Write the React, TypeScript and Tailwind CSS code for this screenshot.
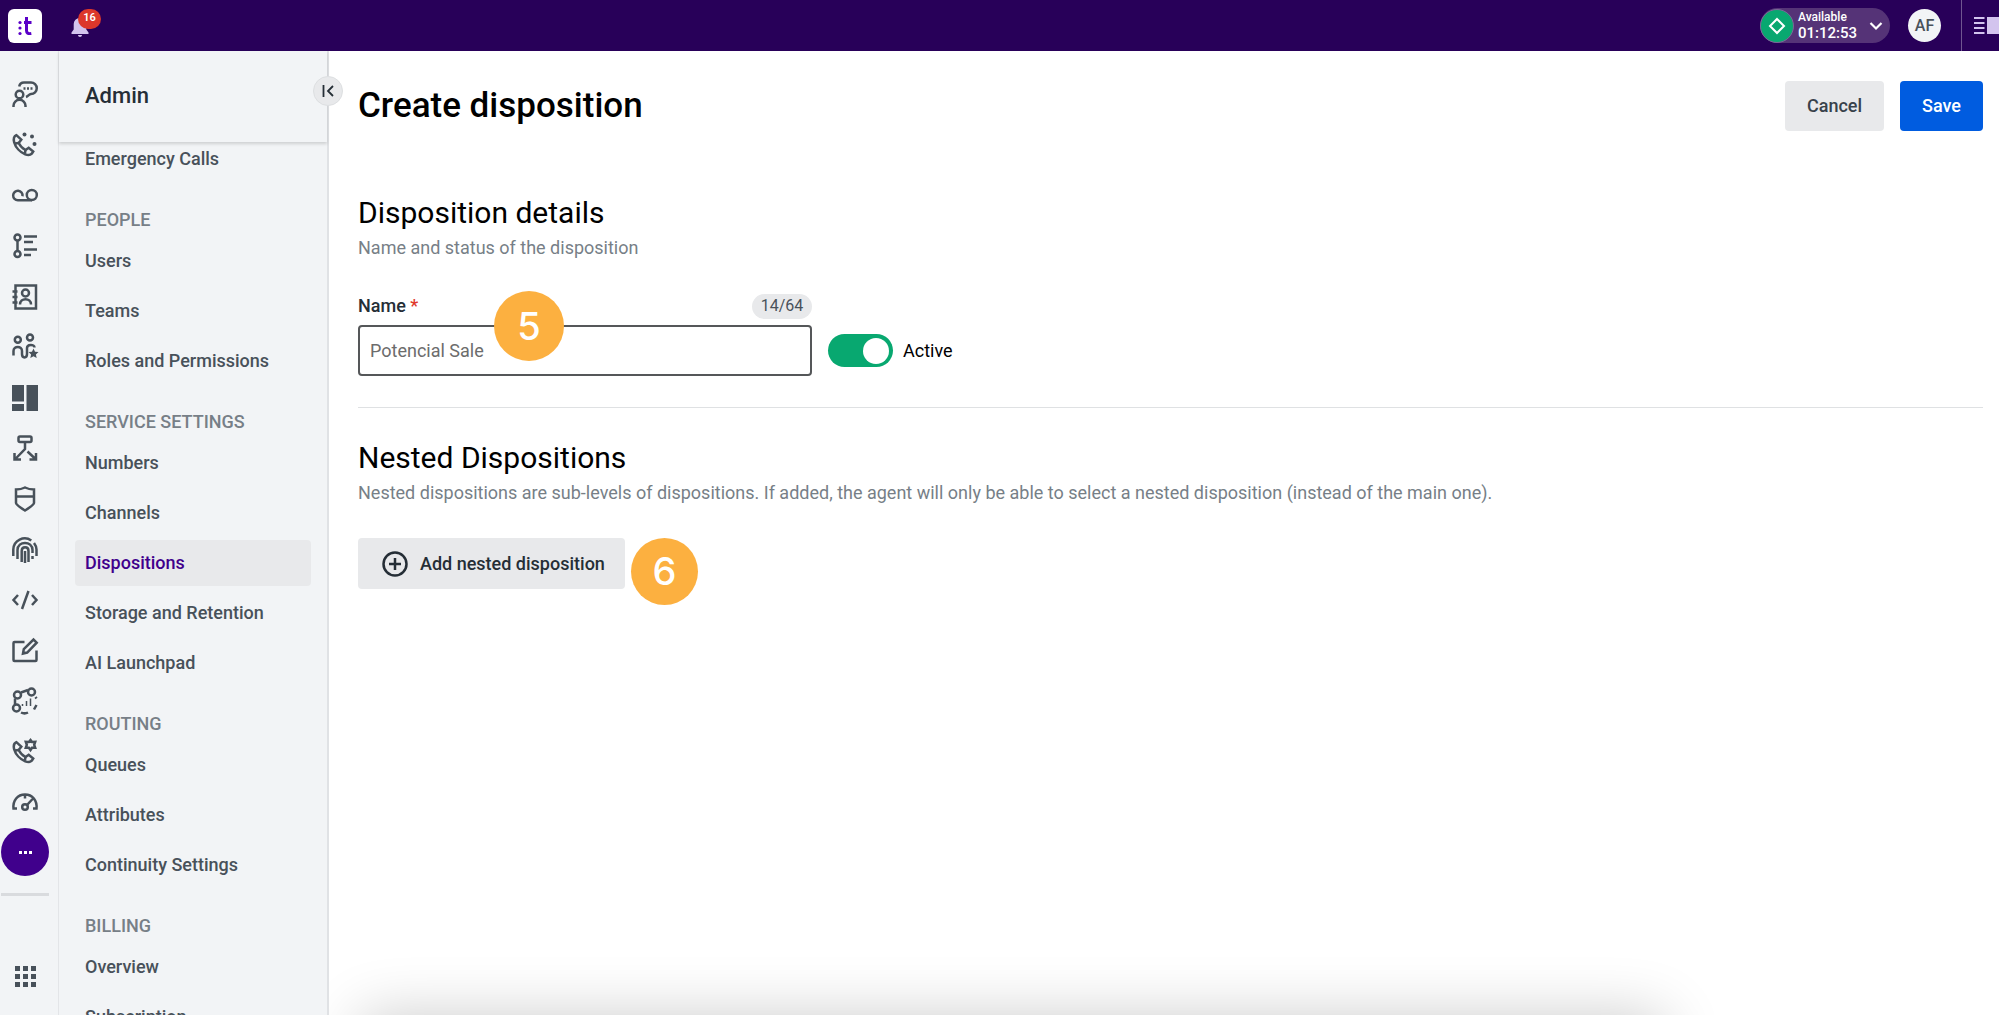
import { useState } from 'react';
import type { ReactNode } from 'react';

interface NavGroup {
  title?: string;
  items: string[];
}

const NAV: NavGroup[] = [
  { items: ['Emergency Calls'] },
  { title: 'People', items: ['Users', 'Teams', 'Roles and Permissions'] },
  {
    title: 'Service settings',
    items: ['Numbers', 'Channels', 'Dispositions', 'Storage and Retention', 'AI Launchpad'],
  },
  { title: 'Routing', items: ['Queues', 'Attributes', 'Continuity Settings'] },
  { title: 'Billing', items: ['Overview', 'Subscription'] },
];

const HANDSET = (
  <>
    <path d="M4.4 3.2C2.2 4.2 1.3 7 2.2 10.4c1.4 5 6 10 11 12 2.600 1 5.200.8 6.600-.7l1.400-2.200-4.500-3.700-3.200 2.200C10.500 16.500 8 13.600 6.700 11l2.600-3.300z" />
    <path d="M6.700 11 3 11.500M13.500 18l-.600 3.600" />
  </>
);

/** Left rail entries, drawn on a 26px grid */
const RAIL: { label: string; icon: ReactNode }[] = [
  {
    label: 'Conversations',
    icon: (
      <>
        <circle cx="7.500" cy="13.500" r="3.800" />
        <path d="M1.500 26v-1.200a6 6 0 0 1 12 0V26" />
        <path d="M7.200 5.500C7.700 3 9.500 1.500 12 1.500h7a5.500 5.500 0 0 1 0 11.500c-2 .2-2.800 2.300-5 3" />
        <path d="M11.500 7.500h2M15 7.500h2M18.500 7.500h2" />
      </>
    ),
  },
  {
    label: 'Dialer',
    icon: (
      <>
        {HANDSET}
        <g fill="currentColor" stroke="none">
          <circle cx="12.500" cy="2.500" r="2" />
          <circle cx="20" cy="4.500" r="2" />
          <circle cx="22.500" cy="12" r="2" />
        </g>
      </>
    ),
  },
  {
    label: 'Voicemail',
    icon: (
      <>
        <path d="M10.500 14.200A4.700 4.700 0 1 0 6 18.200h14" />
        <circle cx="19.800" cy="13" r="5" />
      </>
    ),
  },
  {
    label: 'Activities',
    icon: (
      <>
        <circle cx="5.500" cy="4.500" r="3" />
        <circle cx="5.500" cy="21" r="3" />
        <path d="M5.500 7.500V18M12 3.500h13M12 9h9M12 16.500h13M12 22h7" />
      </>
    ),
  },
  {
    label: 'Contacts',
    icon: (
      <>
        <path d="M3.500 1.500h20.500v23H3.500z" />
        <path d="M.5 7.500h5M.5 13h5M.5 18.500h5" />
        <circle cx="13.500" cy="9" r="3.500" />
        <path d="M8 20.500c0-7 11-7 11 0" />
      </>
    ),
  },
  {
    label: 'Teams',
    icon: (
      <>
        <circle cx="5.800" cy="5.800" r="3" />
        <circle cx="18" cy="3.500" r="3" />
        <path d="M1.500 21.500V17c0-5.500 8.500-5.500 8.500 0v3c0 4.500 5 4.500 5 0v-6c0-4 7.500-4 7.500-.5" />
        <path
          d="m21.500 14.500 1.500 3.300 3.500.3-2.600 2.400.8 3.600-3.200-1.900-3.200 1.900.8-3.600-2.600-2.400 3.500-.3z"
          fill="currentColor"
          stroke="none"
        />
      </>
    ),
  },
  {
    label: 'Dashboards',
    icon: <path d="M0 0h12v16.500H0zM0 19h12v7H0zM14.500 0H26v26H14.500z" fill="currentColor" stroke="none" />,
  },
  {
    label: 'Flows',
    icon: (
      <>
        <rect x="6.500" y="1.500" width="13" height="5.500" rx="1.500" />
        <path d="M13 7v7L2.800 24.500M2.500 18v6.500H9M15.500 16.500l8.500 8M24 18v6.500h-6.500" />
      </>
    ),
  },
  {
    label: 'Guardian',
    icon: <path d="M4 3.500c3.500 0 6-.5 9-2 3 1.500 5.500 2 9 2V17c0 1.500-5 5-9 7.500-4-2.500-9-6-9-7.500zM4 10.500h18" />,
  },
  {
    label: 'Identity',
    icon: (
      <>
        <path d="M1.300 19v-6.500a11.500 11.500 0 0 1 18-9M22 6c1.500 2 2.500 4 2.500 6.500V19" />
        <path d="M5.500 22V13c0-9.500 15-9.500 15 0v3M20.500 19v3" />
        <path d="M9.700 25V14c0-5 6.800-5 6.800 0v11M13 14v12" />
      </>
    ),
  },
  {
    label: 'Developers',
    icon: <path d="m6 8-4.500 5L6 18M20 8l4.500 5-4.500 5M16.500 4 10 22" />,
  },
  {
    label: 'Workspace designer',
    icon: (
      <>
        <path d="M12.500 4h-10a1 1 0 0 0-1 1v17a1 1 0 0 0 1 1h21a1 1 0 0 0 1-1v-9.500" />
        <path d="m11 15.500.8-4.500 9.700-9.500 3.200 3.200-9.500 9.800z" />
      </>
    ),
  },
  {
    label: 'Insights',
    icon: (
      <>
        <circle cx="5.500" cy="7" r="3.500" />
        <circle cx="19.500" cy="4" r="3.500" />
        <circle cx="4.500" cy="20" r="3.500" />
        <path d="M9 4.500 16 2M3 10.500v6M23.500 9l1 1.500M24.500 17l-2.500 4.500M9 24.500c2 1 5 1 7 0" />
        <path d="M10.500 16v2M14.500 13v5M18.500 10.500V18" strokeWidth="1.500" />
      </>
    ),
  },
  {
    label: 'Call settings',
    icon: (
      <>
        {HANDSET}
        <path d="m18.500 1 1.500 2 3.200-.2-1 3 1 3-3.200-.1-1.500 2.300-1.600-2.300-3.100.1 1-3-1-3 3.100.2z" />
      </>
    ),
  },
  {
    label: 'Performance',
    icon: (
      <>
        <path d="M5 18.500H1.500c-.8-8 4-14 11.500-14s12.300 6 11.500 14H21M13 5v3.500M15 15l6-6.500" />
        <circle cx="13" cy="17" r="2.800" />
      </>
    ),
  },
];

function Icon({ children }: { children: ReactNode }) {
  return (
    <svg width="26" height="26" viewBox="0 0 26 26" fill="none" stroke="currentColor" strokeWidth="2.5" overflow="visible" aria-hidden="true">
      {children}
    </svg>
  );
}

function TopBar() {
  return (
    <header className="flex h-[51px] shrink-0 items-center bg-[#280059] pl-2 text-white">
      <a href="#home" aria-label="Home" className="flex size-[34px] items-center justify-center rounded-md bg-white">
        <svg width="14" height="20" viewBox="0 0 14 20" aria-hidden="true">
          <g fill="#5a00c8">
            <circle cx="2" cy="6.500" r="1.600" />
            <circle cx="2" cy="12" r="1.600" />
            <circle cx="2" cy="17.500" r="1.600" />
          </g>
          <path d="M8.500 1v13.500c0 2.500 1.500 3.500 4.800 3M6 6.500h7.500" fill="none" stroke="#5a00c8" strokeWidth="3" />
        </svg>
      </a>
      <button type="button" aria-label="Notifications" className="relative ml-7 flex h-[34px] w-5 items-end justify-center pb-1.5">
        <svg width="18" height="20" viewBox="0 0 18 20" fill="#d3c4ee" aria-hidden="true">
          <path d="M9 1a6 6 0 0 0-6.300 6.300v5.200L.5 15.500V17h17v-1.500l-2.200-3V7.300A6 6 0 0 0 9 1zM7 18h4c0 2.500-4 2.500-4 0z" />
        </svg>
        <span className="absolute top-0 left-2 flex h-5 w-[23px] items-center justify-center rounded-full bg-[#dc372b] text-[11px] font-semibold">
          16
        </span>
      </button>

      <div className="ml-auto flex h-full items-center">
        <button type="button" className="flex h-[35px] w-[130px] items-center rounded-full bg-[#553377] text-left">
          <span className="flex size-[34px] items-center justify-center rounded-full border border-[#7d6699] bg-[#08a870]">
            <svg width="18" height="18" viewBox="0 0 18 18" fill="none" stroke="white" strokeWidth="2" aria-hidden="true">
              <path d="m9 2 7 7-7 7-7-7z" />
            </svg>
          </span>
          <span className="ml-1 flex flex-col pb-0.5 font-medium">
            <span className="text-xs leading-4">Available</span>
            <span className="text-[15px] leading-4">01:12:53</span>
          </span>
          <svg className="ml-3" width="14" height="10" viewBox="0 0 14 10" fill="none" stroke="white" strokeWidth="2.2" aria-hidden="true">
            <path d="m1.500 2 5.500 5.500L12.500 2" />
          </svg>
        </button>
        <button
          type="button"
          className="ml-[18px] flex size-[33px] items-center justify-center rounded-full bg-[#f2f4f6] text-base font-medium text-[#4a525a]"
        >
          AF
        </button>
        <button type="button" aria-label="Toggle side panel" className="ml-5 flex h-full w-[38px] items-center overflow-hidden border-l border-[#6f5690] pl-3">
          <svg className="shrink-0" width="26" height="20" viewBox="0 0 26 20" fill="#d3c4ee" aria-hidden="true">
            <path d="M0 1h10.500v2H0zM0 6h10.500v2H0zM0 11h10.500v2H0zM0 16h10.500v2H0zM13 1h13v17H13z" />
          </svg>
        </button>
      </div>
    </header>
  );
}

function Rail() {
  return (
    <nav
      aria-label="Apps"
      className="flex w-[59px] shrink-0 flex-col items-center border-r border-[#e3e5e8] pt-[18px] pr-2 pb-7 text-[#48515a]"
    >
      <ul className="flex min-h-0 flex-1 flex-col">
        {RAIL.map(({ label, icon }) => (
          <li key={label} className="flex flex-1 items-center">
            <a href="#app" aria-label={label}>
              <Icon>{icon}</Icon>
            </a>
          </li>
        ))}
      </ul>
      <button
        type="button"
        aria-label="More apps"
        className="flex size-12 shrink-0 items-center justify-center gap-0.5 rounded-full bg-[#40008c]"
      >
        <span className="size-[3px] bg-white" />
        <span className="size-[3px] bg-white" />
        <span className="size-[3px] bg-white" />
      </button>
      <hr className="mt-[17px] w-12 border-t-[3px] border-[#d9dbde]" />
      <button type="button" aria-label="All apps" className="mt-[70px] grid grid-cols-3 gap-[3px]">
        {Array.from({ length: 9 }, (_, i) => (
          <span key={i} className="size-[5px] bg-[#48515a]" />
        ))}
      </button>
    </nav>
  );
}

function Sidebar() {
  return (
    <aside className="relative flex w-[270px] shrink-0 flex-col border-r-2 border-[#e0e2e5]">
      <div className="z-10 flex h-[91px] shrink-0 items-center bg-[#f2f4f6] px-[26px] pb-0.5 shadow-[0_2px_3px_rgba(0,0,0,0.15)]">
        <h2 className="text-[22px] font-medium text-[#252e36]">Admin</h2>
      </div>
      <button
        type="button"
        aria-label="Collapse menu"
        className="absolute top-[25px] -right-4 z-20 flex size-[30px] items-center justify-center rounded-full border border-[#dddfe1] bg-[#e8e9eb]"
      >
        <svg width="12" height="12" viewBox="0 0 12 12" fill="none" stroke="#252e36" strokeWidth="1.800" aria-hidden="true">
          <path d="M1.500 0v12M11 1 6 6l5 5" />
        </svg>
      </button>
      <nav aria-label="Admin" className="-mt-1.5 min-h-0 flex-1 overflow-hidden px-4 text-lg font-medium">
        {NAV.map((group, i) => (
          <section key={i}>
            {group.title && <h3 className="mt-[26px] mb-1.5 px-2.5 leading-6 text-[#777f87] uppercase">{group.title}</h3>}
            <ul className="flex flex-col gap-1">
              {group.items.map(item => (
                <li key={item}>
                  <a
                    href="#admin"
                    className={`flex h-[46px] items-center rounded px-2.5 ${
                      item === 'Dispositions' ? 'bg-[#e8e9eb] text-[#40008c]' : 'text-[#48515a]'
                    }`}
                  >
                    {item}
                  </a>
                </li>
              ))}
            </ul>
          </section>
        ))}
      </nav>
    </aside>
  );
}

function DispositionForm() {
  const [name, setName] = useState('Potencial Sale');
  const [active, setActive] = useState(true);

  return (
    <main className="relative min-w-0 flex-1 overflow-hidden bg-white pr-4 pl-[29px]">
      <div className="flex items-center justify-between pt-[30px]">
        <h1 className="text-[35px] leading-[50px] font-medium">Create disposition</h1>
        <div className="flex gap-4 text-lg font-medium">
          <button type="button" className="h-[50px] w-[99px] rounded bg-[#e8e9eb] text-[#38424b]">
            Cancel
          </button>
          <button type="button" className="h-[50px] w-[83px] rounded bg-[#005ce0] text-white">
            Save
          </button>
        </div>
      </div>

      <section className="mt-[62px] border-b border-[#dfe1e3] pb-[31px]">
        <h2 className="text-[30px] leading-10">Disposition details</h2>
        <p className="mt-[3px] text-lg leading-6 text-[#777f87]">Name and status of the disposition</p>
        <div className="mt-[33px] flex items-end gap-4">
          <div className="relative w-[454px]">
            <div className="flex h-[26px] items-center justify-between">
              <label htmlFor="name" className="text-lg font-medium text-[#252e36]">
                Name <span className="text-[#e0382c]">*</span>
              </label>
              <span className="flex h-[25px] w-[60px] items-center justify-center rounded-full bg-[#e8e9eb] text-base text-[#48515a]">
                {name.length}/64
              </span>
            </div>
            <input
              id="name"
              maxLength={64}
              value={name}
              onChange={e => setName(e.target.value)}
              className="mt-1.5 block h-[51px] w-full rounded border-2 border-[#555759] px-2.5 text-lg text-[#6c6c6c]"
            />
            <Marker className="-top-0.5 left-[136px] size-[70px]">5</Marker>
          </div>
          <label className="flex h-[51px] items-center gap-2.5 text-lg">
            <input type="checkbox" role="switch" checked={active} onChange={e => setActive(e.target.checked)} className="peer sr-only" />
            <span className="flex h-[33px] w-[65px] items-center rounded-full bg-gray-400 px-1 peer-checked:justify-end peer-checked:bg-[#08a870]">
              <span className="size-[26px] rounded-full bg-white" />
            </span>
            Active
          </label>
        </div>
      </section>

      <section className="mt-[30px]">
        <h2 className="text-[30px] leading-10">Nested Dispositions</h2>
        <p className="mt-[3px] text-lg leading-6 text-[#777f87]">
          Nested dispositions are sub-levels of dispositions. If added, the agent will only be able to select a nested disposition
          (instead of the main one).
        </p>
        <div className="relative mt-[33px] w-fit">
          <button type="button" className="flex h-[51px] w-[267px] items-center gap-3 rounded bg-[#e8e9eb] pl-6 text-lg font-medium text-[#252e36]">
            <svg width="26" height="26" viewBox="0 0 26 26" fill="none" stroke="currentColor" strokeWidth="2.500" aria-hidden="true">
              <circle cx="13" cy="13" r="11.500" />
              <path d="M13 7v12M7 13h12" />
            </svg>
            Add nested disposition
          </button>
          <Marker className="top-0 left-[273px] size-[67px]">6</Marker>
        </div>
      </section>

      <div className="pointer-events-none absolute -bottom-20 left-8 h-20 w-[78%] shadow-[0_0_60px_rgba(0,0,0,0.2)]" />
    </main>
  );
}

/** Numbered step bubble laid over a control */
function Marker({ className, children }: { className: string; children: ReactNode }) {
  return (
    <span
      className={`absolute flex items-center justify-center rounded-full bg-[#fcb040] font-['Inter','Liberation_Sans',sans-serif] text-[38px] font-medium text-white ${className}`}
    >
      {children}
    </span>
  );
}

export default function App() {
  return (
    <div className="flex h-screen flex-col overflow-hidden bg-[#f2f4f6] font-['Roboto','Liberation_Sans',sans-serif] text-black">
      <TopBar />
      <div className="flex min-h-0 flex-1">
        <Rail />
        <Sidebar />
        <DispositionForm />
      </div>
    </div>
  );
}
